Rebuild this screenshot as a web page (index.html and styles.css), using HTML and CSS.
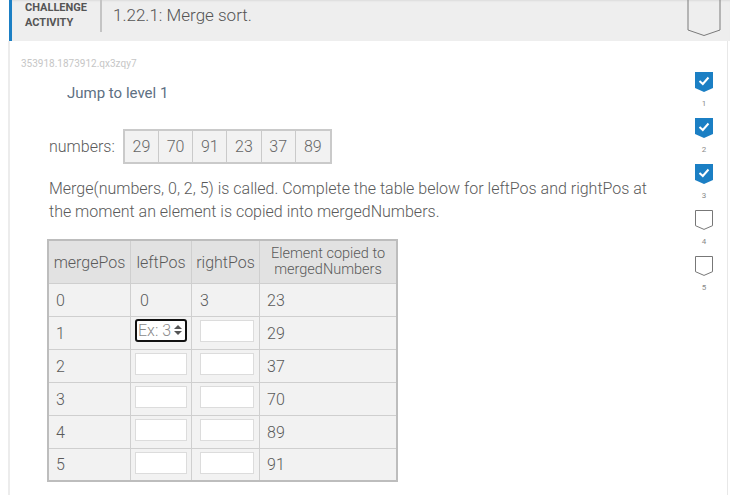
FILE: index.html
```html
<!DOCTYPE html>
<html lang="en">
<head>
<meta charset="utf-8">
<title>1.22.1: Merge sort.</title>
<link rel="stylesheet" href="styles.css">
</head>
<body>
<header class="head">
  <div class="head-label">CHALLENGE<br>ACTIVITY</div>
  <div class="head-sep"></div>
  <h1 class="head-title">1.22.1: Merge sort.</h1>
  <svg class="bookmark" width="34" height="37" viewBox="0 0 34 37" aria-hidden="true">
    <path d="M1 0 V30 L17 35.5 L33 30 V0" fill="none" stroke="#7a7a7a" stroke-width="1"/>
  </svg>
</header>
<section class="card">
  <div class="main">
    <div class="act-id">353918.1873912.qx3zqy7</div>
    <div class="jump">Jump to level 1</div>
    <div class="numbers-row">
      <span class="numbers-label">numbers:</span>
      <div class="array">
        <span class="cell">29</span><span class="cell">70</span><span class="cell">91</span><span class="cell">23</span><span class="cell">37</span><span class="cell">89</span>
      </div>
    </div>
    <p class="prompt">Merge(numbers, 0, 2, 5) is called. Complete the table below for leftPos and rightPos at<br>the moment an element is copied into mergedNumbers.</p>
    <table class="grid">
      <thead>
        <tr>
          <th class="c1">mergePos</th>
          <th class="c2">leftPos</th>
          <th class="c3">rightPos</th>
          <th class="c4 small">Element copied to<br>mergedNumbers</th>
        </tr>
      </thead>
      <tbody>
        <tr><td class="c1">0</td><td class="c2 txt">0</td><td class="c3 txt">3</td><td class="c4">23</td></tr>
        <tr><td class="c1">1</td><td class="c2 in"><span class="focus-box"><input class="field focused" type="text" placeholder="Ex: 3"><svg class="spin" width="10" height="12" viewBox="0 0 10 12" aria-hidden="true"><path d="M5 1 L9 5 H1 Z M5 11 L9 7 H1 Z" fill="#555"/></svg></span></td><td class="c3 in"><input class="field" type="text"></td><td class="c4">29</td></tr>
        <tr><td class="c1">2</td><td class="c2 in"><input class="field" type="text"></td><td class="c3 in"><input class="field" type="text"></td><td class="c4">37</td></tr>
        <tr><td class="c1">3</td><td class="c2 in"><input class="field" type="text"></td><td class="c3 in"><input class="field" type="text"></td><td class="c4">70</td></tr>
        <tr><td class="c1">4</td><td class="c2 in"><input class="field" type="text"></td><td class="c3 in"><input class="field" type="text"></td><td class="c4">89</td></tr>
        <tr class="last"><td class="c1">5</td><td class="c2 in"><input class="field" type="text"></td><td class="c3 in"><input class="field" type="text"></td><td class="c4">91</td></tr>
      </tbody>
    </table>
  </div>
  <aside class="progress">
    <div class="lvl">
      <svg width="18" height="20" viewBox="0 0 18 20"><path d="M0 0 H18 V16 L9 20 L0 16 Z" fill="#1b7fc4"/><path d="M4.5 9 L7.8 12 L13.5 5.5" fill="none" stroke="#fff" stroke-width="2"/></svg>
      <span class="lvl-n">1</span>
    </div>
    <div class="lvl">
      <svg width="18" height="20" viewBox="0 0 18 20"><path d="M0 0 H18 V16 L9 20 L0 16 Z" fill="#1b7fc4"/><path d="M4.5 9 L7.8 12 L13.5 5.5" fill="none" stroke="#fff" stroke-width="2"/></svg>
      <span class="lvl-n">2</span>
    </div>
    <div class="lvl">
      <svg width="18" height="20" viewBox="0 0 18 20"><path d="M0 0 H18 V16 L9 20 L0 16 Z" fill="#1b7fc4"/><path d="M4.5 9 L7.8 12 L13.5 5.5" fill="none" stroke="#fff" stroke-width="2"/></svg>
      <span class="lvl-n">3</span>
    </div>
    <div class="lvl">
      <svg width="18" height="20" viewBox="0 0 18 20"><path d="M0.5 0.5 H17.5 V15.7 L9 19.4 L0.5 15.7 Z" fill="#fff" stroke="#777" stroke-width="1"/></svg>
      <span class="lvl-n">4</span>
    </div>
    <div class="lvl">
      <svg width="18" height="20" viewBox="0 0 18 20"><path d="M0.5 0.5 H17.5 V15.7 L9 19.4 L0.5 15.7 Z" fill="#fff" stroke="#777" stroke-width="1"/></svg>
      <span class="lvl-n">5</span>
    </div>
  </aside>
</section>
</body>
</html>
```
FILE: styles.css
```css
* { box-sizing: border-box; }
body {
  margin: 0;
  background: #fff;
  font-family: Roboto, "Liberation Sans", sans-serif;
  color: #5a5a5a;
  width: 730px;
  height: 495px;
  overflow: hidden;
}
.head {
  position: relative;
  margin-left: 9px;
  height: 41px;
  background: #eeeeee;
  border-left: 3px solid #1b7fc4;
  display: flex;
  align-items: flex-start;
  box-shadow: inset 0 2px 2px -1px rgba(0,0,0,0.08);
}
.head-label {
  width: 88px;
  padding-left: 13px;
  font-size: 11px;
  font-weight: 700;
  line-height: 15px;
  color: #555;
}
.head-sep {
  width: 2px;
  height: 32px;
  background: #c4c4c4;
}
.head-title {
  margin: 0 0 0 11px;
  font-size: 17px;
  font-weight: 300;
  line-height: 31px;
  color: #555;
}
.bookmark {
  position: absolute;
  left: 675px;
  top: 0;
}
.card {
  margin-left: 8px;
  width: 720px;
  height: 460px;
  border-left: 2px solid #ececec;
  border-right: 1px solid #e8e8e8;
  display: flex;
}
.main {
  flex: 1;
  padding: 17px 0 0 11px;
}
.act-id {
  font-size: 10px;
  line-height: 12px;
  color: #c6c6c6;
}
.jump {
  margin: 13px 0 0 46px;
  font-size: 15px;
  line-height: 20px;
  color: #5d7083;
}
.numbers-row {
  margin: 26px 0 0 28px;
  display: flex;
  align-items: center;
  gap: 8px;
}
.numbers-label {
  font-size: 16px;
  font-weight: 300;
}
.array {
  display: flex;
  border: 2px solid #cacaca;
  background: #f2f2f2;
}
.cell {
  width: 34.2px;
  height: 31px;
  line-height: 31px;
  text-align: center;
  font-size: 16px;
  font-weight: 300;
  color: #666;
  border-right: 1px solid #cacaca;
}
.cell:last-child { border-right: 0; }
.prompt {
  margin: 13px 0 0 28px;
  font-size: 16px;
  font-weight: 300;
  line-height: 23px;
}
.grid {
  margin: 16px 0 0 26px;
  border: 2px solid #bdbdbd;
  border-spacing: 0;
  background: #f2f2f2;
  font-size: 16px;
  font-weight: 300;
}
.grid th, .grid td {
  border-right: 1px solid #cfcfcf;
  border-bottom: 1px solid #cfcfcf;
  padding: 0 0 0 7px;
  text-align: left;
}
.grid th:last-child, .grid td:last-child { border-right: 0; }
.grid tr.last td { border-bottom: 0; }
.grid th {
  background: #e2e2e2;
  height: 43px;
  font-weight: 300;
  text-align: center;
  padding: 0;
}
.grid th.small { font-size: 14.5px; line-height: 16px; }
.grid td { height: 33px; }
.grid tr.last td { height: 31px; }
.c1 { width: 82px; }
.c2 { width: 61px; }
.c3 { width: 68px; }
.c4 { width: 136px; }
.grid td.txt.c2 { padding-left: 9px; }
.grid td.txt.c3 { padding-left: 8px; }
.grid td.in { vertical-align: top; padding-top: 3px; }
.grid td.in.c2 { padding-left: 4px; }
.grid td.in.c3 { padding-left: 8px; }
.field {
  display: block;
  width: 52px;
  height: 22px;
  margin: 0;
  padding: 0 1px;
  border: 1px solid #dcdcdc;
  background: #fff;
  font-family: inherit;
  font-size: 16px;
  font-weight: 300;
  color: #555;
  outline: none;
}
.c3 .field { width: 54px; }
.focus-box {
  position: relative;
  display: block;
  width: 52px;
}
.field.focused {
  border: 2px solid #111;
  border-radius: 3px;
  height: 23px;
  margin-top: -1px;
}
.field.focused::placeholder { color: #8a8a8a; }
.spin {
  position: absolute;
  left: 38px;
  top: 5px;
}
.progress {
  width: 34px;
  margin-right: 6px;
  padding-top: 31px;
  display: flex;
  flex-direction: column;
  align-items: center;
}
.lvl {
  height: 46px;
  display: flex;
  flex-direction: column;
  align-items: center;
}
.lvl svg { display: block; }
.lvl-n {
  margin-top: 7px;
  font-size: 8px;
  line-height: 10px;
  color: #8a8a8a;
}
```
